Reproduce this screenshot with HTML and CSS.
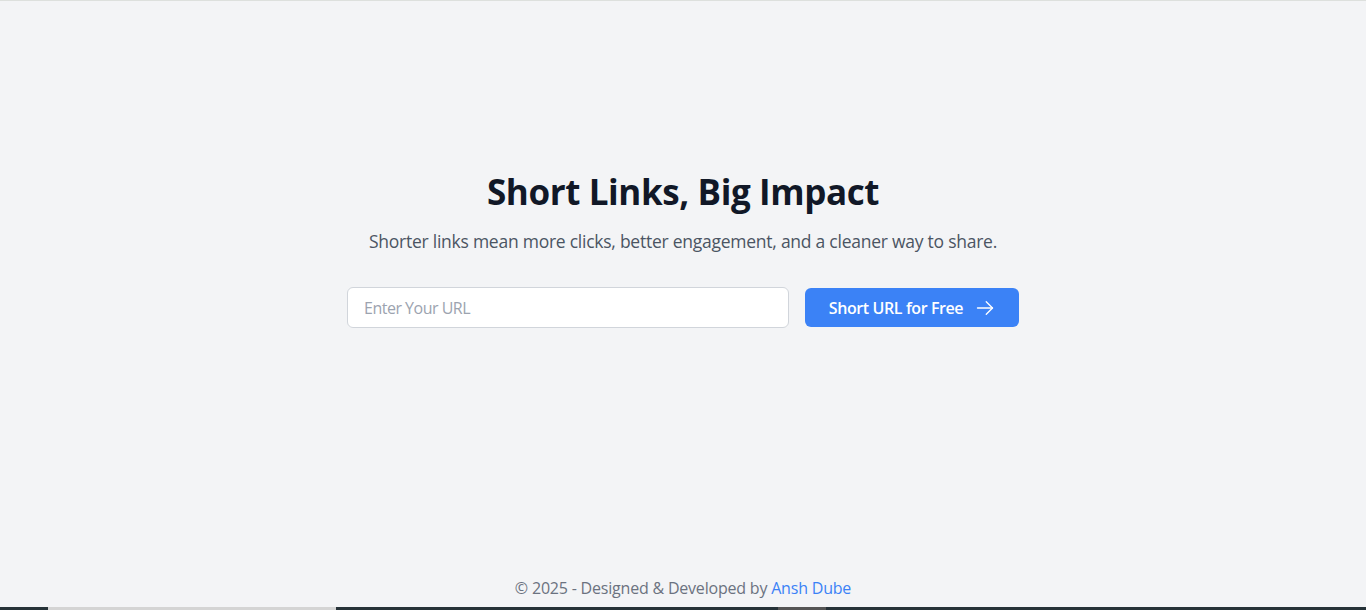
FILE: index.html
```html
<!DOCTYPE html>
<html lang="en">
<head>
<meta charset="utf-8">
<title>Short Links, Big Impact</title>
<link rel="stylesheet" href="styles.css">
</head>
<body>
<div class="page">
  <main class="hero">
    <h1 class="title">Short Links, Big Impact</h1>
    <p class="subtitle">Shorter links mean more clicks, better engagement, and a cleaner way to share.</p>
    <form class="shorten">
      <input class="url-input" type="text" placeholder="Enter Your URL">
      <button class="btn" type="button">Short URL for Free
        <svg class="arrow" width="20" height="20" viewBox="0 0 24 24" fill="none" stroke="currentColor" stroke-width="1.6" stroke-linecap="round" stroke-linejoin="round"><path d="M3 12h18"/><path d="M13.5 4.5L21 12l-7.5 7.5"/></svg>
      </button>
    </form>
  </main>
  <footer class="footer">© 2025 - Designed &amp; Developed by <a class="author" href="#">Ansh Dube</a></footer>
  <div class="strip"><span class="seg seg-a"></span><span class="seg seg-b"></span></div>
</div>
</body>
</html>
```
FILE: styles.css
```css
* { box-sizing: border-box; }
html, body { margin: 0; padding: 0; height: 100%; }
body {
  background: #f3f4f6;
  font-family: "Open Sans", "Noto Sans", sans-serif;
  color: #111827;
}
.page {
  min-height: 100vh;
  display: flex;
  flex-direction: column;
  border-top: 1px solid #dde0dd;
}
.hero {
  flex: 1;
  display: flex;
  flex-direction: column;
  align-items: center;
  padding-top: 171px;
}
.title {
  margin: 0;
  font-size: 35px;
  line-height: 40px;
  font-weight: 700;
  letter-spacing: -0.4px;
  color: #111827;
}
.subtitle {
  margin: 15px 0 0;
  font-size: 17.5px;
  line-height: 28px;
  letter-spacing: -0.25px;
  color: #4b5563;
}
.shorten {
  margin-top: 32px;
  display: flex;
  align-items: center;
  gap: 16px;
}
.url-input {
  width: 442px;
  height: 41px;
  border: 1px solid #d1d5db;
  border-radius: 6px;
  background: #fff;
  padding: 0 16px;
  font-family: inherit;
  font-size: 16px;
  letter-spacing: -0.5px;
  color: #111827;
  outline: none;
}
.url-input::placeholder { color: #9ca3af; }
.btn {
  width: 214px;
  height: 39px;
  border: 0;
  border-radius: 6px;
  background: #3b82f6;
  color: #fff;
  font-family: inherit;
  font-size: 16px;
  font-weight: 600;
  letter-spacing: -0.4px;
  display: flex;
  align-items: center;
  justify-content: center;
  gap: 12px;
  cursor: pointer;
}
.arrow { flex: none; }
.footer {
  text-align: center;
  font-size: 16px;
  line-height: 24px;
  letter-spacing: -0.2px;
  color: #6b7280;
  padding-bottom: 7px;
}
.author { color: #3b82f6; text-decoration: none; }
.strip {
  height: 3px;
  background: #263238;
  display: flex;
}
.seg { height: 3px; background: #d4d4d4; }
.seg-a { margin-left: 48px; width: 288px; }
.seg-b { margin-left: 442px; width: 48px; background: #555; }
```
